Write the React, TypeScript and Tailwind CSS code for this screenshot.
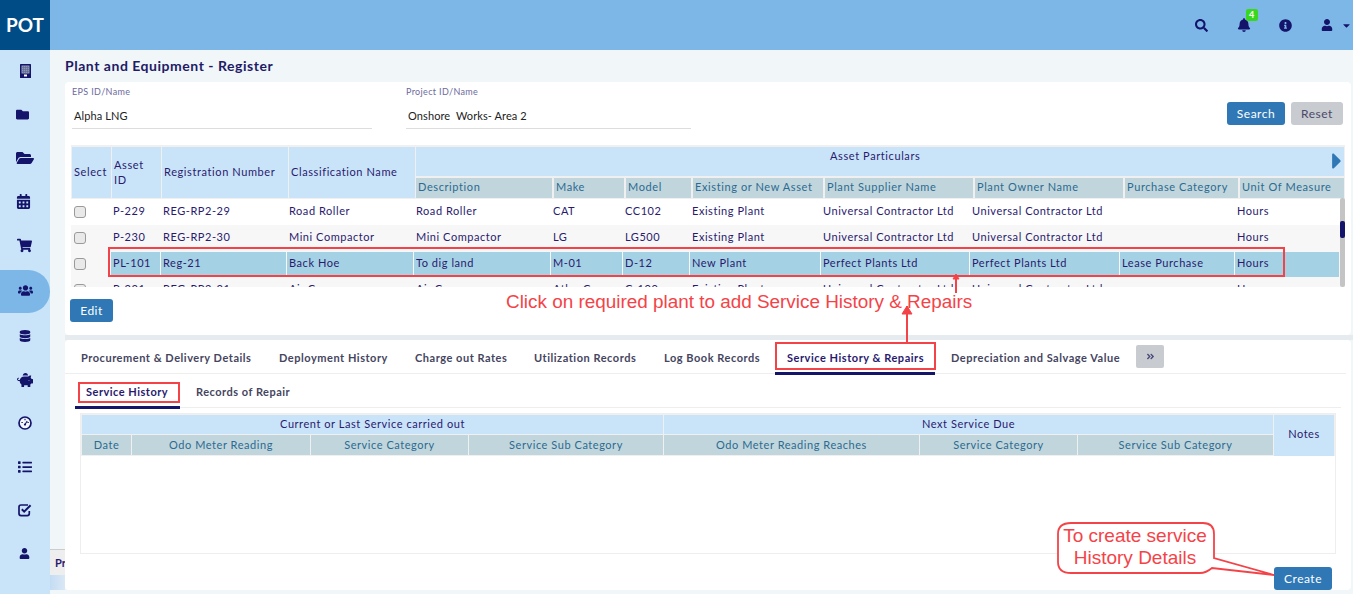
import React from "react";
import { FaFolder, FaFolderOpen, FaCalendarAlt, FaShoppingCart, FaUsers, FaDatabase, FaPiggyBank, FaList, FaUser, FaSearch, FaBell, FaInfoCircle, FaCaretDown, FaAngleDoubleRight, FaCaretRight } from "react-icons/fa";

function BuildingIcon() {
  return (
    <svg width="11" height="14" viewBox="0 0 11 14">
      <rect width="11" height="14" rx="0.5" fill="#14146b" />
      <rect x="1.5" y="1.5" width="8" height="8" fill="#8f97b4" />
      <path d="M1.5 3.5h8M1.5 5.5h8M1.5 7.5h8M3.5 1.5v8M5.5 1.5v8M7.5 1.5v8" stroke="#5d6690" strokeWidth="0.6" />
      <rect x="4" y="10.5" width="3" height="2" fill="#ffffff" />
    </svg>
  );
}
function GaugeIcon() {
  return (
    <svg width="14" height="14" viewBox="0 0 14 14" fill="none">
      <circle cx="7" cy="7" r="6" stroke="#14146b" strokeWidth="1.7" fill="#f4f8fc" />
      <path d="M7 2.8v1.4M3.4 6.5h1.4M9.4 6.5h1.4M7 8.5L9.2 5" stroke="#14146b" strokeWidth="1.1" />
      <circle cx="7" cy="8.6" r="1.1" fill="#14146b" />
    </svg>
  );
}
function CheckIcon() {
  return (
    <svg width="14" height="14" viewBox="0 0 14 14" fill="none">
      <path d="M11.3 8v2.6a2 2 0 0 1-2 2H3a2 2 0 0 1-2-2V4a2 2 0 0 1 2-2h7" stroke="#14146b" strokeWidth="1.7" />
      <path d="M3.8 6.2L6.2 8.6L12.6 2.2" stroke="#14146b" strokeWidth="2" />
    </svg>
  );
}

const side: { n: React.ReactNode; c: string }[] = [
  { n: <BuildingIcon />, c: "h-[43.5px]" },
  { n: <FaFolder className="text-[13px] mr-[6px]" />, c: "h-[43.5px]" },
  { n: <FaFolderOpen className="text-[18px]" />, c: "h-[43.5px]" },
  { n: <FaCalendarAlt className="text-[15px] mr-[3px]" />, c: "h-[43.5px]" },
  { n: <FaShoppingCart className="text-[15px] mr-[2px]" />, c: "h-[43.5px]" },
  { n: <FaUsers className="text-[15px] mb-[3px]" />, c: "h-[43px] mt-[3px] bg-[#7cb7e8] rounded-r-[22px]" },
  { n: <FaDatabase className="text-[12px]" />, c: "h-[43.6px] mt-[1.2px]" },
  { n: <FaPiggyBank className="text-[16px]" />, c: "h-[43.6px]" },
  { n: <GaugeIcon />, c: "h-[43.6px]" },
  { n: <FaList className="text-[14px]" />, c: "h-[43.6px]" },
  { n: <CheckIcon />, c: "h-[43.6px]" },
  { n: <FaUser className="text-[11px] mr-[2px]" />, c: "h-[43.6px]" },
];

const rows = [
  ["P-229", "REG-RP2-29", "Road Roller", "Road Roller", "CAT", "CC102", "Existing Plant", "Universal Contractor Ltd", "Universal Contractor Ltd", "", "Hours"],
  ["P-230", "REG-RP2-30", "Mini Compactor", "Mini Compactor", "LG", "LG500", "Existing Plant", "Universal Contractor Ltd", "Universal Contractor Ltd", "", "Hours"],
  ["PL-101", "Reg-21", "Back Hoe", "To dig land", "M-01", "D-12", "New Plant", "Perfect Plants Ltd", "Perfect Plants Ltd", "Lease Purchase", "Hours"],
  ["P-231", "REG-RP2-31", "Air Compressor", "Air Compressor", "Atlas Copco", "C-100", "Existing Plant", "Universal Contractor Ltd", "Universal Contractor Ltd", "", "Hours"],
];
const sub = ["Description", "Make", "Model", "Existing or New Asset", "Plant Supplier Name", "Plant Owner Name", "Purchase Category", "Unit Of Measure"];
const subW = ["w-[136px]", "w-[70px]", "w-[65px]", "w-[130px]", "w-[148px]", "w-[148px]", "w-[113px]", "w-[104px]"];
const tabs = ["Procurement & Delivery Details", "Deployment History", "Charge out Rates", "Utilization Records", "Log Book Records", "Service History & Repairs", "Depreciation and Salvage Value"];
const tabW = ["w-[198px]", "w-[136px]", "w-[119px]", "w-[130px]", "w-[117px]", "w-[160px]", "w-[201px]"];
const rowGrid = "grid grid-cols-[38px_49px_125px_126px_136px_71px_66px_130px_148px_149px_114px_104px] gap-x-px";

function Field({ label, value, w }: { label: string; value: string; w: string }) {
  return (
    <div className={w}>
      <div className="text-[9px] leading-[10px] tracking-[0.35px] text-[#6d6aa0]">{label}</div>
      <div className="h-[28px] mt-[4px] pl-[2px] border-b border-[#dddddd] text-[11px] leading-[29px] tracking-[0.1px] text-[#222222] whitespace-pre">{value}</div>
    </div>
  );
}

function Btn({ children, grey, w }: { children: React.ReactNode; grey?: boolean; w: string }) {
  return (
    <div className={`${w} h-[23px] rounded-[3px] flex items-center justify-center text-[12px] tracking-[0.5px] ${grey ? "bg-[#c8cbd0] text-[#4a4a6a]" : "bg-[#2f78b5] text-white"}`}>{children}</div>
  );
}

export default function App() {
  return (
    <div className="relative w-[1353px] h-[594px] overflow-hidden flex flex-col bg-[#f1f6f9] text-[#2a1a6e] font-['Lato',sans-serif]">
      <header className="h-[50px] shrink-0 flex bg-[#7cb7e8]">
        <div className="w-[50px] bg-[#004c87] flex items-center justify-center text-white font-bold text-[19px]">POT</div>
        <div className="flex-1 relative flex items-center justify-end text-[#14146b]">
          <FaSearch className="text-[13px] mr-[29px]" />
          <span className="relative mr-[28.5px]">
            <FaBell className="text-[14px]" />
            <span className="absolute -top-[9px] left-[9px] w-[12px] h-[12px] rounded-[2px] bg-[#39d81f] text-white text-[9px] leading-[12px] font-bold text-center">4</span>
          </span>
          <FaInfoCircle className="text-[13px] mr-[29px]" />
          <FaUser className="text-[12px] mr-[8px]" />
          <FaCaretDown className="text-[11px] mr-[1px]" />
        </div>
      </header>
      <div className="flex-1 flex min-h-0">
        <aside className="w-[50px] shrink-0 bg-[#c9e4f9] flex flex-col text-[#14146b]">
          {side.map(({ n, c }, i) => (
            <div key={i} className={`flex items-center justify-center shrink-0 ${i === 0 ? "-mt-[0.5px]" : ""} ${c}`}>{n}</div>
          ))}
        </aside>
        <main className="flex-1 min-w-0 relative">
          <h1 className="h-[32px] pl-[15px] pt-[7px] text-[14px] leading-[17px] font-bold tracking-[0.53px] text-[#221a66]">Plant and Equipment - Register</h1>
          <section className="relative z-10 ml-[15px] mr-[2px] h-[253px] bg-white rounded-[4px] pt-[5px]">
            <div className="flex pl-[7px] pr-[8px] h-[58px]">
              <Field label="EPS ID/Name" value="Alpha LNG" w="w-[300px]" />
              <div className="w-[34px]" />
              <Field label="Project ID/Name" value="Onshore  Works- Area 2" w="w-[285px]" />
              <div className="ml-auto flex gap-[6px] pt-[15px]">
                <Btn w="w-[58px]">Search</Btn>
                <Btn w="w-[52px]" grey>Reset</Btn>
              </div>
            </div>
            <div className="relative ml-[6px] w-[1274px] h-[142px] bg-[#f0f0f0] pt-[2px] overflow-hidden">
              <div className="flex gap-x-px pl-[1px] h-[51px] text-[11px] tracking-[0.6px] leading-[15px]">
                <div className="w-[39px] bg-[#c9e4f9] flex items-center pl-[2px] pb-[3px]">Select</div>
                <div className="w-[49px] bg-[#c9e4f9] flex items-center pl-[2px] pb-[1px]">Asset<br />ID</div>
                <div className="w-[126px] bg-[#c9e4f9] flex items-center pl-[2px] pb-[3px]">Registration Number</div>
                <div className="w-[126px] bg-[#c9e4f9] flex items-center pl-[2px] pb-[3px]">Classification Name</div>
                <div className="w-[928px] flex flex-col gap-y-[2px]">
                  <div className="relative h-[29px] bg-[#c9e4f9] leading-[16px] pt-[1px] pl-[414px]">
                    Asset Particulars
                    <FaCaretRight className="absolute right-[-6px] top-[1px] text-[#2f78b5] text-[26px]" />
                  </div>
                  <div className="flex gap-x-[2px] h-[20px] text-[#2c6a92]">
                    {sub.map((t, i) => (
                      <div key={t} className={`bg-[#c0d6dc] pl-[2px] leading-[18px] whitespace-nowrap ${subW[i]}`}>{t}</div>
                    ))}
                  </div>
                </div>
              </div>
              <div className="mt-[1px] text-[11px] tracking-[0.55px]">
                {rows.map((r, i) => (
                  <div key={i} className={`h-[26px] ${i % 2 || i === 2 ? "bg-[#f7f7f7]" : "bg-white"}`}>
                    <div className={`${rowGrid} pl-[1px] h-[26px]`}>
                      <div className="flex items-center pl-[2px]"><span className="block w-[12px] h-[12px] rounded-[3px] border border-[#9a9a9a] bg-[#e9e9e9]" /></div>
                      {r.map((c, j) => (
                        <div key={j} className={`pl-[2px] whitespace-nowrap overflow-hidden ${i === 2 ? "bg-[#a5d1e4] mt-[1px] leading-[22px]" : "leading-[24px]"}`}>{c}</div>
                      ))}
                    </div>
                  </div>
                ))}
              </div>
              <div className="absolute right-0 top-[53px] w-[5px] h-[89px] bg-[#c4c4c4] rounded-[2px]">
                <div className="absolute top-[23px] w-[5px] h-[17px] bg-[#14146b] rounded-[2px]" />
              </div>
            </div>
            <div className="pl-[5px] pt-[12px]"><Btn w="w-[43px]">Edit</Btn></div>
          </section>
          <div className="h-[5px] ml-[15px] bg-[#e6ebef]" />
          <section className="relative z-10 ml-[15px] mr-[2px] h-[250px] bg-white rounded-[4px]">
            <div className="relative flex items-start h-[34px] pl-[10px] mr-[5px] border-b border-[#eeeeee] text-[11px] font-bold tracking-[0.53px] text-[#454560]">
              {tabs.map((t, i) => (
                <div key={t} className={`${tabW[i]} h-[35px] pt-[11px] leading-[14px] whitespace-nowrap ${i === 5 ? "pl-[12px] border-b-[3px] border-[#14146b] text-[#2a1a6e]" : i === 6 ? "pl-[16px]" : "pl-[6px]"}`}>{t}</div>
              ))}
              <div className="w-[28px] h-[23px] mt-[5px] rounded-[2px] bg-[#c8cbd0] flex items-center justify-center text-[#4a4a7a] text-[9px]"><FaAngleDoubleRight /></div>
            </div>
            <div className="flex h-[34px] ml-[10px] mr-[10px] border-b border-[#eeeeee] text-[11px] font-bold tracking-[0.5px] text-[#454560]">
              <div className="w-[105px] h-[35px] pl-[11px] pt-[11px] leading-[14px] border-b-[3px] border-[#14146b] text-[#2a1a6e]">Service History</div>
              <div className="pl-[16px] pt-[11px] leading-[14px]">Records of Repair</div>
            </div>
            <div className="ml-[15px] mt-[5px] w-[1256px] h-[141px] border border-[#eeeeee] relative">
              <div className="bg-[#f0f0f0] h-[42px] pt-[1px] pl-[1px] text-[11px] tracking-[0.55px] text-center flex gap-x-px">
                <div className="w-[581px] flex flex-col gap-y-[1px]">
                  <div className="h-[19px] bg-[#c9e4f9] leading-[17px]">Current or Last Service carried out</div>
                  <div className="flex gap-x-px h-[20px] text-[#2c6a92] leading-[20px]">
                    <div className="w-[49px] bg-[#c0d6dc]">Date</div>
                    <div className="w-[178px] bg-[#c0d6dc]">Odo Meter Reading</div>
                    <div className="w-[157px] bg-[#c0d6dc]">Service Category</div>
                    <div className="flex-1 bg-[#c0d6dc]">Service Sub Category</div>
                  </div>
                </div>
                <div className="w-[609px] flex flex-col gap-y-[1px]">
                  <div className="h-[19px] bg-[#c9e4f9] leading-[17px]">Next Service Due</div>
                  <div className="flex gap-x-px h-[20px] text-[#2c6a92] leading-[20px]">
                    <div className="w-[255px] bg-[#c0d6dc]">Odo Meter Reading Reaches</div>
                    <div className="w-[157px] bg-[#c0d6dc]">Service Category</div>
                    <div className="flex-1 bg-[#c0d6dc]">Service Sub Category</div>
                  </div>
                </div>
                <div className="w-[60px] bg-[#c9e4f9] flex items-center justify-center pb-[2px]">Notes</div>
              </div>
            </div>
            <div className="flex justify-end mr-[19px] mt-[13px]"><Btn w="w-[58px]">Create</Btn></div>
          </section>
          <div className="absolute left-0 top-[499px] w-[15px] h-[26px] bg-[#eeeeee] border-t border-[#cccccc] text-[11px] font-bold leading-[26px] pl-[5px] overflow-hidden">Pr</div>
          <div className="absolute left-0 top-[525px] w-[15px] h-[15px] bg-gradient-to-r from-[#c3dcf3] to-[#dbe8f5]" />
        </main>
      </div>

      <div className="absolute z-20 left-[108px] top-[247px] w-[1177px] h-[30px] border-2 border-[#f44348]" />
      <div className="absolute z-20 left-[775px] top-[342px] w-[161px] h-[28px] border-2 border-[#f44348]" />
      <div className="absolute z-20 left-[78px] top-[382px] w-[102px] h-[21px] border-2 border-[#f44348]" />
      <div className="absolute z-20 left-[506px] top-[291px] text-[18.9px] leading-[21px] font-['Liberation_Sans',sans-serif] text-[#f44348] whitespace-nowrap">Click on required plant to add Service History &amp; Repairs</div>
      <svg className="absolute z-20 left-0 top-0 pointer-events-none" width="1353" height="594" fill="none" stroke="#f44348">
        <path d="M956 293V275" strokeWidth="2" />
        <path d="M953 279h6l-3-5z" fill="#f44348" />
        <path d="M907 342V306" strokeWidth="2" />
        <path d="M902 314h10l-5-8z" fill="#f44348" />
        <path d="M1071 523H1203Q1214 523 1214 534V558L1274 575L1212 568Q1206 573 1200 573H1071Q1058 573 1058 562V534Q1058 523 1071 523Z" fill="white" strokeWidth="1.8" />
      </svg>
      <div className="absolute z-20 left-[1055px] top-[525px] w-[160px] text-center text-[19px] leading-[22px] font-['Liberation_Sans',sans-serif] text-[#f44348]">To create service<br />History Details</div>
    </div>
  );
}
